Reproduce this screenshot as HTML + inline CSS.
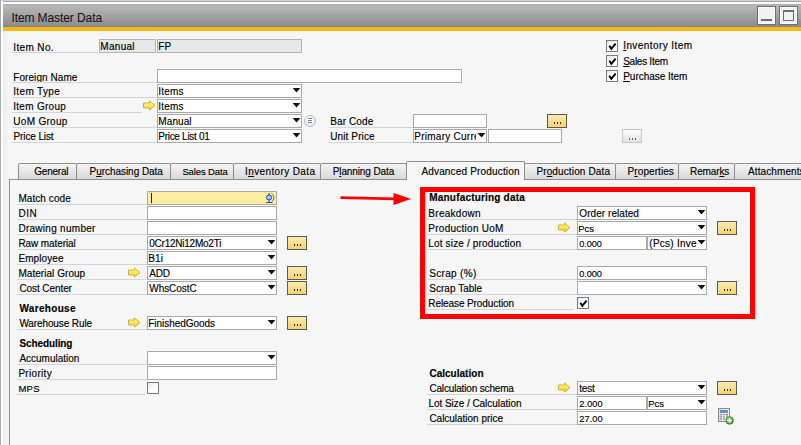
<!DOCTYPE html><html><head><meta charset="utf-8"><style>
*{margin:0;padding:0;box-sizing:border-box}
html,body{width:801px;height:445px;overflow:hidden;background:#f6f6f6;font-family:"Liberation Sans",sans-serif;-webkit-text-stroke:0.15px}
#root{position:absolute;left:0;top:0;width:801px;height:445px;background:#f6f6f6;overflow:hidden}
.t{position:absolute;white-space:nowrap;line-height:12px;font-size:10px;letter-spacing:0.1px}
.ul{position:absolute;height:1px;background:#d3d6d9}
.fld,.fldg,.fldy{position:absolute;background:#fff;border:1px solid #a9a9a9;border-radius:0.5px}
.fldg{background:#e8e8e8;border-color:#b4b4b4}
.fldy{background:#fdeda0}
.ft{position:absolute;left:1px;top:1px;line-height:12px;font-size:10px;letter-spacing:0.1px;color:#000;white-space:nowrap}
.dd{position:absolute;width:9px;height:5px}
.yb{position:absolute;width:20px;height:14px;border:1px solid #5a5a5a;background:linear-gradient(#fbeab4,#f3d46a)}
.yb i{position:absolute;top:7px;width:1px;height:2px;background:#4a1818}
.yb i:nth-child(1){left:6px}.yb i:nth-child(2){left:9px}.yb i:nth-child(3){left:12px}
.gb{position:absolute;width:20px;height:14px;border:1px solid #c6c6c6;background:linear-gradient(#fcfcfc,#e2e2e2)}
.gb i{position:absolute;top:8px;width:1px;height:2px;background:#80587a}
.gb i:nth-child(1){left:6px}.gb i:nth-child(2){left:9px}.gb i:nth-child(3){left:12px}
.ar{position:absolute}
.cb{position:absolute;width:12px;height:12px;border:1px solid #787c80;background:linear-gradient(135deg,#e8e8e8,#fff 60%)}
.tab{position:absolute;top:163px;height:17px;border:1px solid #8e8e8e;border-radius:2px 2px 0 0;background:linear-gradient(#f4f4f4,#d9d9d9);font-size:10px;letter-spacing:0.1px;color:#000;line-height:12px;text-align:center;padding-top:3px;padding-left:7px;white-space:nowrap;overflow:hidden}
.tab.act{top:161px;height:19px;background:#f6f6f6;border-bottom:none;padding-top:5px}
</style></head><body><div id="root">
<div style="position:absolute;left:0;top:0;width:801px;height:1px;background:#d2d2d2"></div>
<div style="position:absolute;left:0;top:1px;width:801px;height:1px;background:#a6a6a6"></div>
<div style="position:absolute;left:0;top:2px;width:801px;height:2px;background:#fdfdfd"></div>
<div style="position:absolute;left:0;top:0;width:1px;height:445px;background:#a9a9a9"></div>
<div style="position:absolute;left:1px;top:1px;width:2px;height:444px;background:#fdfdfd"></div>
<div style="position:absolute;left:3px;top:31px;width:4px;height:414px;background:#f0f0f0"></div>
<div style="position:absolute;left:3px;top:4px;width:798px;height:23px;background:linear-gradient(#ababab 0px,#b8b8b8 2px,#8a8a8a)"></div>
<div style="position:absolute;left:3px;top:26px;width:798px;height:1px;background:#83838d"></div>
<div style="position:absolute;left:3px;top:27px;width:798px;height:4px;background:#fdb812"></div>
<div class="t" style="left:11.40px;top:12px;font-size:12px;color:#1a1020;letter-spacing:-0.09px;-webkit-text-stroke:0.05px;">Item Master Data</div>
<div style="position:absolute;left:757px;top:6px;width:19px;height:19px;border:1px solid #6e6e6e;background:#f2f2f2;box-shadow:inset 0 0 0 1px #fff"></div>
<div style="position:absolute;left:779px;top:6px;width:19px;height:19px;border:1px solid #6e6e6e;background:#f2f2f2;box-shadow:inset 0 0 0 1px #fff"></div>
<div style="position:absolute;left:761px;top:19px;width:11px;height:2px;background:#6e6e6e"></div>
<div style="position:absolute;left:783px;top:10px;width:11px;height:11px;border:1px solid #6e6e6e;border-top-width:2px"></div>
<div class="t" style="left:13.25px;top:42px;font-size:10px;color:#000;letter-spacing:0.37px;">Item No.</div>
<div class="ul" style="left:12px;top:52px;width:86px"></div>
<div class="fldg" style="left:99px;top:39px;width:57px;height:14px">
</div>
<div class="t" style="left:100.30px;top:41px;font-size:10px;color:#000;letter-spacing:0.30px;">Manual</div>
<div class="fldg" style="left:157px;top:39px;width:145px;height:14px">
</div>
<div class="t" style="left:158.30px;top:41px;font-size:10px;color:#000;">FP</div>
<div class="t" style="left:13.25px;top:72px;font-size:10px;color:#000;letter-spacing:0.07px;">Foreign Name</div>
<div class="ul" style="left:12px;top:82px;width:145px"></div>
<div class="fld" style="left:157px;top:69px;width:305px;height:14px">
</div>
<div class="t" style="left:13.25px;top:86px;font-size:10px;color:#000;letter-spacing:0.34px;">Item Type</div>
<div class="ul" style="left:12px;top:97px;width:145px"></div>
<div class="fld" style="left:157px;top:84px;width:145px;height:14px">
</div>
<div class="t" style="left:158.30px;top:86px;font-size:10px;color:#000;letter-spacing:0.17px;">Items</div>
<svg class="dd" style="left:292px;top:88px" viewBox="0 0 9 5"><path d="M0.6 0 H8.4 L4.5 4.6 Z" fill="#111"/></svg>
<div class="t" style="left:13.25px;top:101px;font-size:10px;color:#000;letter-spacing:0.28px;">Item Group</div>
<div class="ul" style="left:12px;top:112px;width:130px"></div>
<svg class="ar" style="left:143px;top:100px" width="13" height="11" viewBox="0 0 13 11"><defs><linearGradient id="ag" x1="0" y1="0" x2="0" y2="1"><stop offset="0" stop-color="#fff4a0"/><stop offset="0.45" stop-color="#fbe86a"/><stop offset="1" stop-color="#efcf2c"/></linearGradient></defs><path d="M0.5 3 H6.5 V1 L12 5.5 L6.5 10 V8 H0.5 Z" fill="url(#ag)" stroke="#d2b42c" stroke-width="1"/></svg>
<div class="fld" style="left:157px;top:99px;width:145px;height:14px">
</div>
<div class="t" style="left:158.30px;top:101px;font-size:10px;color:#000;letter-spacing:0.17px;">Items</div>
<svg class="dd" style="left:292px;top:103px" viewBox="0 0 9 5"><path d="M0.6 0 H8.4 L4.5 4.6 Z" fill="#111"/></svg>
<div class="t" style="left:13.25px;top:116px;font-size:10px;color:#000;letter-spacing:0.31px;">UoM Group</div>
<div class="ul" style="left:12px;top:127px;width:145px"></div>
<div class="fld" style="left:157px;top:114px;width:145px;height:14px">
</div>
<div class="t" style="left:158.30px;top:116px;font-size:10px;color:#000;">Manual</div>
<svg class="dd" style="left:292px;top:118px" viewBox="0 0 9 5"><path d="M0.6 0 H8.4 L4.5 4.6 Z" fill="#111"/></svg>
<div style="position:absolute;left:304px;top:115px;width:12px;height:12px;border-radius:50%;border:1px solid #b3bccb;background:radial-gradient(circle at 40% 35%,#fff,#dfe6f2)"></div>
<div style="position:absolute;left:308px;top:118px;width:4px;height:1px;background:#7b8294"></div>
<div style="position:absolute;left:308px;top:120px;width:4px;height:1px;background:#7b8294"></div>
<div style="position:absolute;left:308px;top:122px;width:4px;height:1px;background:#7b8294"></div>
<div class="t" style="left:13.50px;top:131px;font-size:10px;color:#000;letter-spacing:-0.11px;">Price List</div>
<div class="ul" style="left:12px;top:142px;width:145px"></div>
<div class="fld" style="left:157px;top:129px;width:145px;height:14px">
</div>
<div class="t" style="left:158.30px;top:131px;font-size:10px;color:#000;letter-spacing:-0.29px;">Price List 01</div>
<svg class="dd" style="left:292px;top:133px" viewBox="0 0 9 5"><path d="M0.6 0 H8.4 L4.5 4.6 Z" fill="#111"/></svg>
<div class="t" style="left:330.25px;top:116px;font-size:10px;color:#000;letter-spacing:0.11px;">Bar Code</div>
<div class="ul" style="left:329px;top:127px;width:84px"></div>
<div class="fld" style="left:413px;top:114px;width:74px;height:14px">
</div>
<div class="yb" style="left:547px;top:114px"><i></i><i></i><i></i></div>
<div class="t" style="left:330.25px;top:131px;font-size:10px;color:#000;letter-spacing:0.11px;">Unit Price</div>
<div class="ul" style="left:329px;top:142px;width:84px"></div>
<div class="fld" style="left:413px;top:129px;width:74px;height:14px">
</div>
<div class="t" style="left:414.30px;top:131px;font-size:10px;color:#000;letter-spacing:0.25px;width:62px;overflow:hidden;">Primary Curre</div>
<svg class="dd" style="left:477px;top:133px" viewBox="0 0 9 5"><path d="M0.6 0 H8.4 L4.5 4.6 Z" fill="#111"/></svg>
<div class="fld" style="left:488px;top:129px;width:74px;height:14px">
</div>
<div class="gb" style="left:622px;top:129px"><i></i><i></i><i></i></div>
<div class="cb" style="left:606px;top:40px"><svg width="12" height="12" viewBox="0 0 12 12" style="position:absolute;left:-1px;top:-1px"><path d="M3.3 5.8 L5.3 8.8 L9.6 3.6" fill="none" stroke="#000" stroke-width="1.9"/></svg></div>
<div class="t" style="left:623.20px;top:40px;font-size:10px;color:#000;letter-spacing:0.42px;"><u>I</u>nventory Item</div>
<div class="cb" style="left:606px;top:55px"><svg width="12" height="12" viewBox="0 0 12 12" style="position:absolute;left:-1px;top:-1px"><path d="M3.3 5.8 L5.3 8.8 L9.6 3.6" fill="none" stroke="#000" stroke-width="1.9"/></svg></div>
<div class="t" style="left:623.20px;top:56px;font-size:10px;color:#000;letter-spacing:-0.27px;"><u>S</u>ales Item</div>
<div class="cb" style="left:606px;top:70px"><svg width="12" height="12" viewBox="0 0 12 12" style="position:absolute;left:-1px;top:-1px"><path d="M3.3 5.8 L5.3 8.8 L9.6 3.6" fill="none" stroke="#000" stroke-width="1.9"/></svg></div>
<div class="t" style="left:623.20px;top:71px;font-size:10px;color:#000;letter-spacing:-0.02px;"><u>P</u>urchase Item</div>
<div style="position:absolute;left:9px;top:179px;width:800px;height:300px;border-left:1px solid #8e8e8e;border-top:1px solid #8e8e8e;background:#f6f6f6"></div>
<div class="tab" style="left:18px;width:59px"></div>
<div class="t" style="left:34.25px;top:166px;font-size:10px;color:#000;letter-spacing:-0.21px;">General</div>
<div class="tab" style="left:76px;width:95px"></div>
<div class="t" style="left:89.50px;top:166px;font-size:10px;color:#000;letter-spacing:-0.04px;">P<u>u</u>rchasing Data</div>
<div class="tab" style="left:170px;width:64px"></div>
<div class="t" style="left:182.40px;font-size:9.5px !important;top:166px;font-size:10px;color:#000;letter-spacing:-0.13px;">Sales Data</div>
<div class="tab" style="left:233px;width:88px"></div>
<div class="t" style="left:245.00px;top:166px;font-size:10px;color:#000;letter-spacing:0.38px;">I<u>n</u>ventory Data</div>
<div class="tab" style="left:320px;width:87px"></div>
<div class="t" style="left:332.70px;top:166px;font-size:10px;color:#000;letter-spacing:-0.11px;">P<u>l</u>anning Data</div>
<div class="tab act" style="left:406px;width:119px"></div>
<div class="t" style="left:421.40px;top:166px;font-size:10px;color:#000;letter-spacing:0.17px;">Advanced Production</div>
<div class="tab" style="left:524px;width:92px"></div>
<div class="t" style="left:536.40px;top:166px;font-size:10px;color:#000;letter-spacing:0.13px;">Pr<u>o</u>duction Data</div>
<div class="tab" style="left:615px;width:64px"></div>
<div class="t" style="left:627.60px;top:166px;font-size:10px;color:#000;letter-spacing:0.07px;">P<u>r</u>operties</div>
<div class="tab" style="left:678px;width:57px"></div>
<div class="t" style="left:690.10px;top:166px;font-size:10px;color:#000;letter-spacing:-0.13px;">Remar<u>k</u>s</div>
<div class="tab" style="left:734px;width:97px"></div>
<div class="t" style="left:748.00px;top:166px;font-size:10px;color:#000;">Attachments</div>
<div class="t" style="left:18.40px;top:193px;font-size:10px;color:#000;letter-spacing:0.07px;">Match code</div>
<div class="ul" style="left:17px;top:204px;width:130px"></div>
<div class="t" style="left:18.40px;top:208px;font-size:10px;color:#000;letter-spacing:0.60px;">DIN</div>
<div class="ul" style="left:17px;top:219px;width:130px"></div>
<div class="t" style="left:18.40px;top:223px;font-size:10px;color:#000;letter-spacing:0.28px;">Drawing number</div>
<div class="ul" style="left:17px;top:234px;width:130px"></div>
<div class="t" style="left:18.40px;top:238px;font-size:10px;color:#000;letter-spacing:-0.09px;">Raw material</div>
<div class="ul" style="left:17px;top:249px;width:130px"></div>
<div class="t" style="left:18.40px;top:253px;font-size:10px;color:#000;letter-spacing:0.09px;">Employee</div>
<div class="ul" style="left:17px;top:264px;width:130px"></div>
<div class="t" style="left:18.40px;top:268px;font-size:10px;color:#000;letter-spacing:0.05px;">Material Group</div>
<div class="ul" style="left:17px;top:279px;width:130px"></div>
<div class="t" style="left:19.40px;top:283px;font-size:10px;color:#000;letter-spacing:-0.08px;">Cost Center</div>
<div class="ul" style="left:17px;top:294px;width:130px"></div>
<div class="fldy" style="left:147px;top:191px;width:130px;height:14px">
</div>
<div style="position:absolute;left:151px;top:193px;width:1px;height:10px;background:#10106a"></div>
<svg style="position:absolute;left:264px;top:192px" width="12" height="12" viewBox="0 0 12 12"><path d="M7.5 1.5 A5 5 0 0 1 7.5 10" fill="none" stroke="#6a6a50" stroke-width="1"/><ellipse cx="5" cy="5.5" rx="2.7" ry="2.4" fill="#a8c4e8" stroke="#2058b0" stroke-width="1"/><path d="M5 1 V3 M5 8 V10.5 M2 10.5 H8.5" stroke="#2058b0" stroke-width="1.2"/></svg>
<div class="fld" style="left:147px;top:206px;width:130px;height:14px">
</div>
<div class="fld" style="left:147px;top:221px;width:130px;height:14px">
</div>
<div class="fld" style="left:147px;top:236px;width:130px;height:14px">
</div>
<div class="t" style="left:149.30px;top:238px;font-size:10px;color:#000;letter-spacing:-0.24px;">0Cr12Ni12Mo2Ti</div>
<svg class="dd" style="left:267px;top:240px" viewBox="0 0 9 5"><path d="M0.6 0 H8.4 L4.5 4.6 Z" fill="#111"/></svg>
<div class="yb" style="left:287px;top:236px"><i></i><i></i><i></i></div>
<div class="fld" style="left:147px;top:251px;width:130px;height:14px">
</div>
<div class="t" style="left:148.30px;top:253px;font-size:10px;color:#000;">B1i</div>
<svg class="dd" style="left:267px;top:255px" viewBox="0 0 9 5"><path d="M0.6 0 H8.4 L4.5 4.6 Z" fill="#111"/></svg>
<svg class="ar" style="left:128px;top:267px" width="13" height="11" viewBox="0 0 13 11"><defs><linearGradient id="ag" x1="0" y1="0" x2="0" y2="1"><stop offset="0" stop-color="#fff4a0"/><stop offset="0.45" stop-color="#fbe86a"/><stop offset="1" stop-color="#efcf2c"/></linearGradient></defs><path d="M0.5 3 H6.5 V1 L12 5.5 L6.5 10 V8 H0.5 Z" fill="url(#ag)" stroke="#d2b42c" stroke-width="1"/></svg>
<div class="fld" style="left:147px;top:266px;width:130px;height:14px">
</div>
<div class="t" style="left:149.30px;top:268px;font-size:10px;color:#000;letter-spacing:-0.25px;">ADD</div>
<svg class="dd" style="left:267px;top:270px" viewBox="0 0 9 5"><path d="M0.6 0 H8.4 L4.5 4.6 Z" fill="#111"/></svg>
<div class="yb" style="left:287px;top:266px"><i></i><i></i><i></i></div>
<div class="fld" style="left:147px;top:281px;width:130px;height:14px">
</div>
<div class="t" style="left:149.30px;top:283px;font-size:10px;color:#000;letter-spacing:-0.06px;">WhsCostC</div>
<svg class="dd" style="left:267px;top:285px" viewBox="0 0 9 5"><path d="M0.6 0 H8.4 L4.5 4.6 Z" fill="#111"/></svg>
<div class="yb" style="left:287px;top:281px"><i></i><i></i><i></i></div>
<div class="t" style="left:19.40px;top:303px;font-size:10px;font-weight:bold;color:#000;letter-spacing:0.33px;">Warehouse</div>
<div class="t" style="left:19.40px;top:318px;font-size:10px;color:#000;letter-spacing:-0.11px;">Warehouse Rule</div>
<div class="ul" style="left:17px;top:329px;width:130px"></div>
<svg class="ar" style="left:128px;top:317px" width="13" height="11" viewBox="0 0 13 11"><defs><linearGradient id="ag" x1="0" y1="0" x2="0" y2="1"><stop offset="0" stop-color="#fff4a0"/><stop offset="0.45" stop-color="#fbe86a"/><stop offset="1" stop-color="#efcf2c"/></linearGradient></defs><path d="M0.5 3 H6.5 V1 L12 5.5 L6.5 10 V8 H0.5 Z" fill="url(#ag)" stroke="#d2b42c" stroke-width="1"/></svg>
<div class="fld" style="left:147px;top:316px;width:130px;height:14px">
</div>
<div class="t" style="left:148.30px;top:318px;font-size:10px;color:#000;letter-spacing:-0.05px;">FinishedGoods</div>
<svg class="dd" style="left:267px;top:320px" viewBox="0 0 9 5"><path d="M0.6 0 H8.4 L4.5 4.6 Z" fill="#111"/></svg>
<div class="yb" style="left:287px;top:316px"><i></i><i></i><i></i></div>
<div class="t" style="left:19.40px;top:338px;font-size:10px;font-weight:bold;color:#000;letter-spacing:-0.09px;">Scheduling</div>
<div class="t" style="left:19.40px;top:353px;font-size:10px;color:#000;letter-spacing:0.00px;">Accumulation</div>
<div class="ul" style="left:17px;top:364px;width:130px"></div>
<div class="fld" style="left:147px;top:351px;width:130px;height:14px">
</div>
<svg class="dd" style="left:267px;top:355px" viewBox="0 0 9 5"><path d="M0.6 0 H8.4 L4.5 4.6 Z" fill="#111"/></svg>
<div class="t" style="left:18.40px;top:368px;font-size:10px;color:#000;letter-spacing:0.31px;">Priority</div>
<div class="ul" style="left:17px;top:379px;width:130px"></div>
<div class="fld" style="left:147px;top:366px;width:130px;height:14px">
</div>
<div class="t" style="left:18.40px;font-size:9.5px !important;top:383px;font-size:10px;color:#000;letter-spacing:0.30px;">MPS</div>
<div class="ul" style="left:17px;top:394px;width:128px"></div>
<div class="cb" style="left:147px;top:382px"></div>
<svg style="position:absolute;left:0;top:0" width="801" height="445"><path d="M340.5 196.2 L395 197.6 L395 200.3 L340.5 198.9 Z" fill="#f00"/><path d="M393.5 193 L411 199 L393.5 205 Z" fill="#f00"/></svg>
<div style="position:absolute;left:420px;top:187px;width:335px;height:132px;border:5px solid #fe0000"></div>
<div class="t" style="left:429.30px;top:192px;font-size:10px;font-weight:bold;color:#000;letter-spacing:0.19px;">Manufacturing data</div>
<div class="t" style="left:428.30px;top:208px;font-size:10px;color:#000;letter-spacing:0.29px;">Breakdown</div>
<div class="ul" style="left:427px;top:219px;width:150px"></div>
<div class="t" style="left:428.30px;top:223px;font-size:10px;color:#000;letter-spacing:0.26px;">Production UoM</div>
<div class="ul" style="left:427px;top:234px;width:150px"></div>
<div class="t" style="left:428.30px;top:238px;font-size:10px;color:#000;letter-spacing:0.16px;">Lot size / production</div>
<div class="ul" style="left:427px;top:249px;width:150px"></div>
<div class="t" style="left:429.30px;top:268px;font-size:10px;color:#000;letter-spacing:0.31px;">Scrap (%)</div>
<div class="ul" style="left:427px;top:279px;width:150px"></div>
<div class="t" style="left:429.30px;top:283px;font-size:10px;color:#000;letter-spacing:0.02px;">Scrap Table</div>
<div class="ul" style="left:427px;top:294px;width:150px"></div>
<div class="t" style="left:428.30px;top:298px;font-size:10px;color:#000;letter-spacing:-0.09px;">Release Production</div>
<div class="ul" style="left:427px;top:309px;width:147px"></div>
<div class="fld" style="left:577px;top:206px;width:130px;height:14px">
</div>
<div class="t" style="left:579.30px;top:208px;font-size:10px;color:#000;letter-spacing:0.06px;">Order related</div>
<svg class="dd" style="left:697px;top:210px" viewBox="0 0 9 5"><path d="M0.6 0 H8.4 L4.5 4.6 Z" fill="#111"/></svg>
<svg class="ar" style="left:558px;top:222px" width="13" height="11" viewBox="0 0 13 11"><defs><linearGradient id="ag" x1="0" y1="0" x2="0" y2="1"><stop offset="0" stop-color="#fff4a0"/><stop offset="0.45" stop-color="#fbe86a"/><stop offset="1" stop-color="#efcf2c"/></linearGradient></defs><path d="M0.5 3 H6.5 V1 L12 5.5 L6.5 10 V8 H0.5 Z" fill="url(#ag)" stroke="#d2b42c" stroke-width="1"/></svg>
<div class="fld" style="left:577px;top:221px;width:130px;height:14px">
</div>
<div class="t" style="left:578.30px;font-size:9.5px !important;top:223px;font-size:10px;color:#000;letter-spacing:-0.10px;">Pcs</div>
<svg class="dd" style="left:697px;top:225px" viewBox="0 0 9 5"><path d="M0.6 0 H8.4 L4.5 4.6 Z" fill="#111"/></svg>
<div class="yb" style="left:717px;top:221px"><i></i><i></i><i></i></div>
<div class="fld" style="left:577px;top:236px;width:70px;height:14px">
</div>
<div class="t" style="left:579.30px;top:238px;font-size:9.2px;color:#000;letter-spacing:-0.12px;">0.000</div>
<div class="fld" style="left:647px;top:236px;width:60px;height:14px">
</div>
<div class="t" style="left:649.30px;top:238px;font-size:10px;color:#000;letter-spacing:0.26px;">(Pcs) Inve</div>
<svg class="dd" style="left:697px;top:240px" viewBox="0 0 9 5"><path d="M0.6 0 H8.4 L4.5 4.6 Z" fill="#111"/></svg>
<div class="fld" style="left:577px;top:266px;width:130px;height:14px">
</div>
<div class="t" style="left:579.30px;top:268px;font-size:9.2px;color:#000;letter-spacing:-0.12px;">0.000</div>
<div class="fld" style="left:577px;top:281px;width:130px;height:14px">
</div>
<svg class="dd" style="left:697px;top:285px" viewBox="0 0 9 5"><path d="M0.6 0 H8.4 L4.5 4.6 Z" fill="#111"/></svg>
<div class="yb" style="left:717px;top:281px"><i></i><i></i><i></i></div>
<div class="cb" style="left:577px;top:297px"><svg width="12" height="12" viewBox="0 0 12 12" style="position:absolute;left:-1px;top:-1px"><path d="M3.3 5.8 L5.3 8.8 L9.6 3.6" fill="none" stroke="#000" stroke-width="1.9"/></svg></div>
<div class="t" style="left:429.40px;top:368px;font-size:10px;font-weight:bold;color:#000;letter-spacing:0.02px;">Calculation</div>
<div class="t" style="left:429.40px;top:383px;font-size:10px;color:#000;letter-spacing:-0.16px;">Calculation schema</div>
<div class="ul" style="left:427px;top:394px;width:150px"></div>
<div class="t" style="left:428.40px;top:398px;font-size:10px;color:#000;letter-spacing:-0.04px;">Lot Size / Calculation</div>
<div class="ul" style="left:427px;top:409px;width:150px"></div>
<div class="t" style="left:429.40px;top:413px;font-size:10px;color:#000;letter-spacing:-0.02px;">Calculation price</div>
<div class="ul" style="left:427px;top:424px;width:150px"></div>
<svg class="ar" style="left:558px;top:382px" width="13" height="11" viewBox="0 0 13 11"><defs><linearGradient id="ag" x1="0" y1="0" x2="0" y2="1"><stop offset="0" stop-color="#fff4a0"/><stop offset="0.45" stop-color="#fbe86a"/><stop offset="1" stop-color="#efcf2c"/></linearGradient></defs><path d="M0.5 3 H6.5 V1 L12 5.5 L6.5 10 V8 H0.5 Z" fill="url(#ag)" stroke="#d2b42c" stroke-width="1"/></svg>
<div class="fld" style="left:577px;top:381px;width:130px;height:14px">
</div>
<div class="t" style="left:579.30px;top:383px;font-size:10px;color:#000;letter-spacing:-0.23px;">test</div>
<svg class="dd" style="left:697px;top:385px" viewBox="0 0 9 5"><path d="M0.6 0 H8.4 L4.5 4.6 Z" fill="#111"/></svg>
<div class="yb" style="left:717px;top:381px"><i></i><i></i><i></i></div>
<div class="fld" style="left:577px;top:396px;width:70px;height:14px">
</div>
<div class="t" style="left:579.30px;top:398px;font-size:9.2px;color:#000;letter-spacing:0.10px;">2.000</div>
<div class="fld" style="left:647px;top:396px;width:60px;height:14px">
</div>
<div class="t" style="left:648.30px;font-size:9.5px !important;top:398px;font-size:10px;color:#000;letter-spacing:-0.05px;">Pcs</div>
<svg class="dd" style="left:697px;top:400px" viewBox="0 0 9 5"><path d="M0.6 0 H8.4 L4.5 4.6 Z" fill="#111"/></svg>
<div class="fld" style="left:577px;top:411px;width:130px;height:14px">
</div>
<div class="t" style="left:579.30px;top:413px;font-size:9.2px;color:#000;letter-spacing:0.10px;">27.00</div>
<svg style="position:absolute;left:712px;top:404px" width="26" height="24" viewBox="0 0 26 24"><defs><linearGradient id="cg" x1="0" y1="0" x2="1" y2="0"><stop offset="0" stop-color="#d8d8d8"/><stop offset="1" stop-color="#f8f8f8"/></linearGradient><radialGradient id="gg" cx="0.4" cy="0.35" r="0.7"><stop offset="0" stop-color="#a8d898"/><stop offset="1" stop-color="#3c8a30"/></radialGradient></defs><rect x="6.5" y="4.5" width="11" height="13" fill="url(#cg)" stroke="#8a8a8a"/><rect x="8" y="6" width="8" height="3" fill="#5f8ed2"/><g fill="#9a9a9a"><rect x="8" y="10" width="2" height="1.3"/><rect x="11" y="10" width="2" height="1.3"/><rect x="8" y="12.2" width="2" height="1.3"/><rect x="11" y="12.2" width="2" height="1.3"/><rect x="14" y="12.2" width="2" height="1.3"/><rect x="8" y="14.4" width="2" height="1.3"/><rect x="11" y="14.4" width="2" height="1.3"/></g><rect x="14" y="10" width="2" height="1.3" fill="#e04040"/><circle cx="17.6" cy="16.5" r="3.8" fill="url(#gg)" stroke="#2f7a28" stroke-width="0.7"/><path d="M17.6 14.3 V18.7 M15.4 16.5 H19.8" stroke="#fff" stroke-width="1.3"/></svg>
</div></body></html>
